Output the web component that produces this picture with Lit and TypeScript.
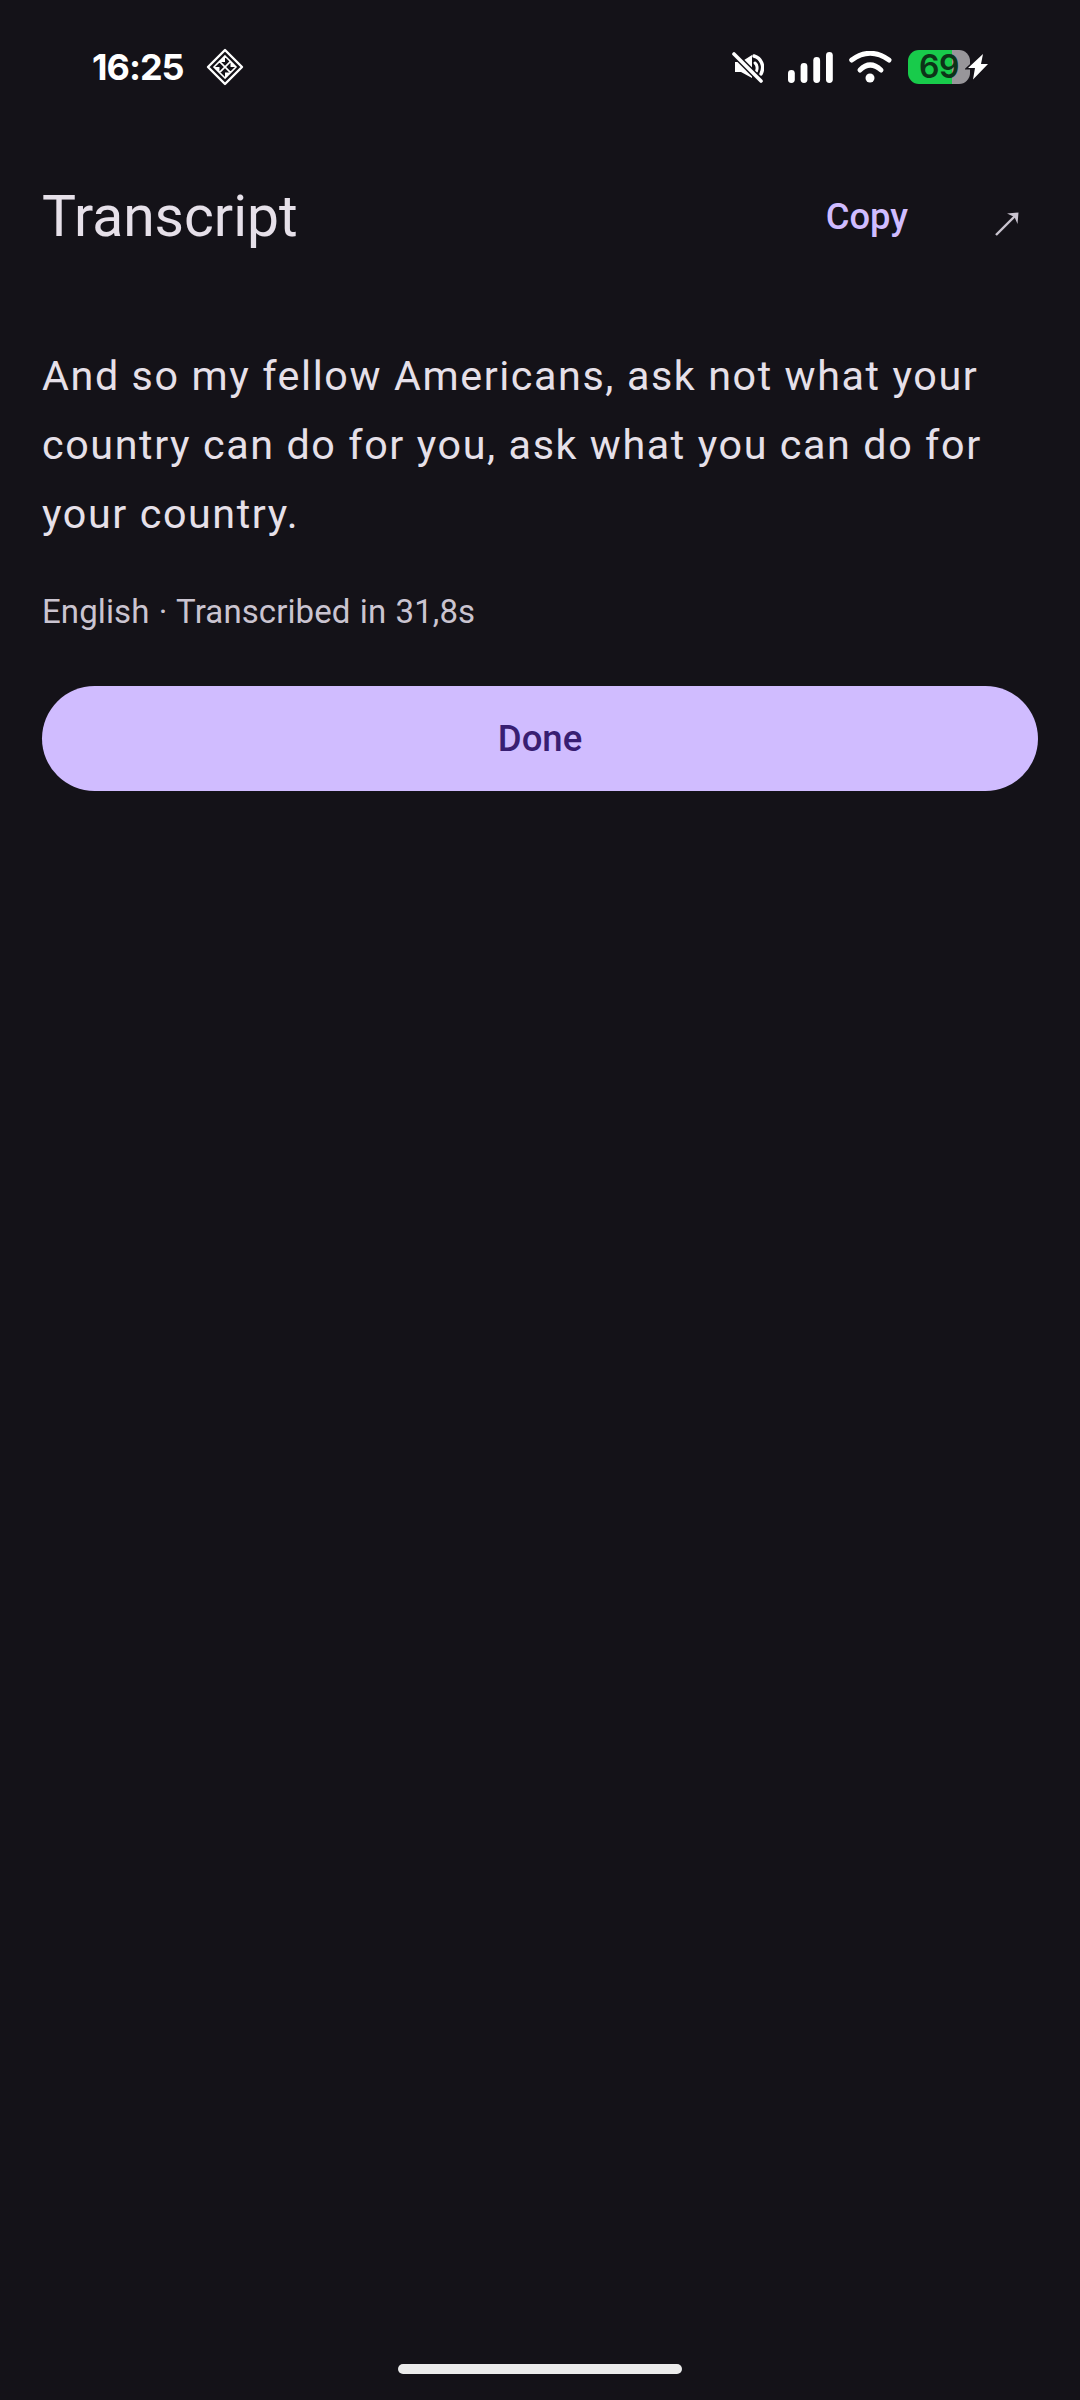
import { LitElement, html, css } from "lit";
import { customElement } from "lit/decorators.js";

@customElement("app-root")
export class AppRoot extends LitElement {
  static styles = css`
    :host { display: block; width: 1080px; height: 2400px; background: #141218; font-family: Roboto, "Liberation Sans", sans-serif; color: #e6e0e9; position: relative; overflow: hidden; }
    .status { height: 134px; box-sizing: border-box; padding: 0 91px 0 92px; display: flex; align-items: center; justify-content: space-between; }
    .left, .right { display: flex; align-items: center; }
    .time { font-family: Inter, "Open Sans", sans-serif; font-size: 36px; font-weight: 700; color: #fff; line-height: 40px; letter-spacing: -1px; }
    .diamond { margin-left: 22px; display: block; }
    .right svg { display: block; }
    .mute { margin-right: 24px; margin-top: 4px; }
    .signal { margin-right: 15px; }
    .wifi { margin-right: 16px; }
    .battery { width: 62px; height: 34px; border-radius: 11px; background: linear-gradient(90deg, #18cb4b 0 71%, #98969a 71% 100%); color: #0d3318; font-family: Inter, "Open Sans", sans-serif; font-size: 32px; font-weight: 600; line-height: 34px; text-align: center; letter-spacing: -0.5px; }
    .bolt { margin-left: -5px; position: relative; }
    .header { display: flex; align-items: center; padding: 0 42px; height: 84px; margin-top: 41px; }
    .title { flex: 1; font-size: 57px; line-height: 84px; font-weight: 400; }
    .copy { font-size: 36.3px; font-weight: 500; color: #d0bcff; line-height: 50px; }
    .arrow { margin-left: 87px; margin-right: 19px; margin-top: 14px; display: block; }
    .body { margin: 83px 42px 0; font-size: 41.25px; line-height: 69px; letter-spacing: 1.6px; }
    .meta { margin: 41px 42px 0; font-size: 33px; line-height: 44px; color: #cac4d0; letter-spacing: 0.1px; word-spacing: 1px; }
    .done { display: flex; align-items: center; justify-content: center; margin: 52px 42px 0; height: 105px; border-radius: 53px; background: #d0bcff; color: #381e72; font-size: 36.5px; font-weight: 500; }
    .home { position: absolute; left: 398px; top: 2364px; width: 284px; height: 10px; border-radius: 5px; background: #ebebeb; }
  `;

  render() {
    return html`
      <div class="status">
        <div class="left">
          <span class="time">16:25</span>
          <svg class="diamond" width="38" height="38" viewBox="0 0 38 38" fill="none">
            <path d="M19 2 36 19 19 36 2 19Z" stroke="#fff" stroke-width="2.4" stroke-linejoin="round"/>
            <path d="M19 8 24.500 13.500 19 19 13.500 13.500ZM8 19 13.500 13.500 19 19 13.500 24.500ZM30 19 24.500 24.500 19 19 24.500 13.500ZM19 30 13.500 24.500 19 19 24.500 24.500Z" stroke="#fff" stroke-width="1.6"/>
            <path d="M19 8V14H13.500ZM30 19H24.500V13.500ZM19 30V24.500H24.500ZM8 19H13.500V24.500Z" fill="#fff"/>
          </svg>
        </div>
        <div class="right">
          <svg class="mute" width="32" height="34" viewBox="0 0 32 34" fill="none">
            <path d="M3 10H9L20 3V26L9 20H3Z" fill="#fff"/>
            <path d="M22 4C29 6 33 14 29 22" stroke="#fff" stroke-width="3.4" stroke-linecap="round"/>
            <path d="M23 11C25.500 13 25.500 17 24.500 19" stroke="#fff" stroke-width="3" stroke-linecap="round"/>
            <path d="M0 0 30 30" stroke="#141218" stroke-width="6.500"/>
            <path d="M2 2 29 29" stroke="#fff" stroke-width="3.600" stroke-linecap="round"/>
          </svg>
          <svg class="signal" width="45" height="31" viewBox="0 0 45 31" fill="#fff">
            <rect x="0" y="18" width="6.800" height="13" rx="3.400"/>
            <rect x="12.600" y="11" width="6.800" height="20" rx="3.400"/>
            <rect x="25.300" y="5" width="6.800" height="26" rx="3.400"/>
            <rect x="38" y="0" width="6.800" height="31" rx="3.400"/>
          </svg>
          <svg class="wifi" width="44" height="32" viewBox="0 0 44 32" fill="none">
            <path d="M3.700 9Q22 -4.400 41 9" stroke="#fff" stroke-width="5" stroke-linecap="round"/>
            <path d="M12 19Q22 9 33 19" stroke="#fff" stroke-width="5" stroke-linecap="round"/>
            <circle cx="22" cy="27" r="4.500" fill="#fff"/>
          </svg>
          <div class="battery">69</div>
          <svg class="bolt" width="24" height="28" viewBox="0 0 24 28">
            <path d="M18 1 3 15H10L8 26.500 23 11H16Z" fill="#fff" stroke="#141218" stroke-width="3" paint-order="stroke"/>
          </svg>
        </div>
      </div>
      <div class="header">
        <span class="title">Transcript</span>
        <span class="copy">Copy</span>
        <svg class="arrow" width="24" height="24" viewBox="0 0 24 24" fill="none">
          <path d="M1 23 22 2" stroke="#cac4d0" stroke-width="2.400"/>
          <path d="M12 1.500 23.500 0.500 22.500 12 19.500 5 Z" fill="#cac4d0"/>
        </svg>
      </div>
      <div class="body">And so my fellow Americans, ask not what your<br />country can do for you, ask what you can do for<br />your country.</div>
      <div class="meta">English · Transcribed in 31,8s</div>
      <div class="done">Done</div>
      <div class="home"></div>
    `;
  }
}
